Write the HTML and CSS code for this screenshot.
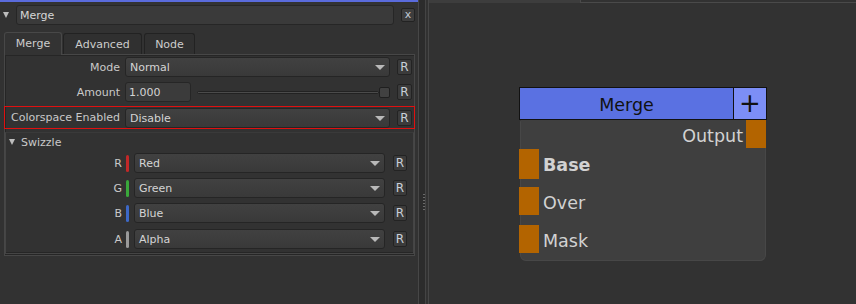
FILE: index.html
```html
<!DOCTYPE html>
<html lang="en">
<head>
<meta charset="utf-8">
<title>Merge</title>
<link rel="stylesheet" href="styles.css">
</head>
<body>
<div class="app">
	<div class="props">
		<div class="props-top"></div>
		<div class="name-row">
			<span class="tri"></span>
			<div class="name-input">Merge</div>
			<span class="close-btn">x</span>
		</div>
		<ul class="tabs">
			<li class="tab is-selected">Merge</li>
			<li class="tab">Advanced</li>
			<li class="tab">Node</li>
		</ul>
		<div class="tab-panel">
			<div class="row">
				<label class="lbl">Mode</label>
				<div class="combo">Normal<span class="arrow"></span></div>
				<span class="rbtn">R</span>
			</div>
			<div class="row">
				<label class="lbl">Amount</label>
				<div class="num">1.000</div>
				<div class="slider"><span class="track"></span><span class="handle"></span></div>
				<span class="rbtn">R</span>
			</div>
			<div class="row is-marked">
				<label class="lbl">Colorspace Enabled</label>
				<div class="combo">Disable<span class="arrow"></span></div>
				<span class="rbtn">R</span>
			</div>
			<div class="group">
				<div class="group-head"><span class="tri small"></span>Swizzle</div>
				<div class="swz">
					<label class="lbl">R</label><span class="chan red"></span>
					<div class="combo">Red<span class="arrow"></span></div>
					<span class="rbtn">R</span>
				</div>
				<div class="swz">
					<label class="lbl">G</label><span class="chan green"></span>
					<div class="combo">Green<span class="arrow"></span></div>
					<span class="rbtn">R</span>
				</div>
				<div class="swz">
					<label class="lbl">B</label><span class="chan blue"></span>
					<div class="combo">Blue<span class="arrow"></span></div>
					<span class="rbtn">R</span>
				</div>
				<div class="swz">
					<label class="lbl">A</label><span class="chan gray"></span>
					<div class="combo">Alpha<span class="arrow"></span></div>
					<span class="rbtn">R</span>
				</div>
			</div>
		</div>
	</div>

	<div class="splitter"><span class="grip"></span></div>

	<div class="graph">
		<div class="graph-top"><span class="graph-tab"></span><span class="graph-line"></span></div>
		<div class="node">
			<div class="node-title">
				<span class="node-name">Merge</span>
				<span class="node-plus">+</span>
			</div>
			<div class="node-body">
				<div class="port-row out"><span class="port-label">Output</span><span class="port"></span></div>
				<div class="port-row base"><span class="port"></span><span class="port-label">Base</span></div>
				<div class="port-row over"><span class="port"></span><span class="port-label">Over</span></div>
				<div class="port-row mask"><span class="port"></span><span class="port-label">Mask</span></div>
			</div>
		</div>
	</div>
</div>
</body>
</html>
```

FILE: styles.css
```css
* {
	margin: 0;
	padding: 0;
	box-sizing: border-box;
}
html, body {
	width: 856px;
	height: 304px;
	overflow: hidden;
	background: #323232;
}
body {
	font-family: "DejaVu Sans", sans-serif;
	font-size: 11px;
	color: #c9c9c9;
}
ul, li {
	list-style: none;
}
.app {
	display: flex;
	height: 304px;
}

/* properties panel */
.props {
	width: 418px;
	flex: none;
}
.props-top {
	height: 2px;
	background: #5a6bdc;
}
.name-row {
	display: flex;
	align-items: center;
	height: 20px;
	margin-top: 3px;
}
.tri {
	width: 0;
	height: 0;
	margin: 0 7px 0 3px;
	border-left: 3px solid transparent;
	border-right: 3px solid transparent;
	border-top: 6px solid #bdbdbd;
}
.tri.small {
	margin: 0 6px 0 3px;
}
.name-input {
	width: 378px;
	height: 20px;
	padding-left: 3px;
	line-height: 19px;
	background: #3a3a3a;
	border: 1px solid #262626;
	border-radius: 3px;
	color: #d6d6d6;
}
.close-btn {
	width: 14px;
	height: 14px;
	margin-left: 7px;
	font-size: 11px;
	line-height: 11px;
	text-align: center;
	color: #c0c8d4;
	background: #3d3d3d;
	border: 1px solid #222;
	border-radius: 2px;
}

/* tabs */
.tabs {
	display: flex;
	align-items: flex-end;
	height: 29px;
	padding-left: 4px;
}
.tab {
	height: 21px;
	margin-right: 1px;
	line-height: 22px;
	text-align: center;
	background: #303030;
	border: 1px solid #222;
	border-bottom: none;
	border-radius: 3px 3px 0 0;
	color: #cdcdcd;
}
.tab.is-selected {
	height: 23px;
	width: 58px;
	line-height: 22px;
	background: #333;
	border-color: #484848;
	position: relative;
	top: 1px;
}
.tab:nth-child(2) { width: 79px; }
.tab:nth-child(3) { width: 51px; margin-left: 1px; }

.tab-panel {
	width: 411px;
	height: 202px;
	margin-left: 4px;
	padding-top: 2px;
	border: 1px solid #474747;
	box-shadow: inset 1px 1px 0 #262626;
}

/* parameter rows */
.row {
	display: flex;
	align-items: center;
	height: 20px;
	margin-bottom: 5px;
}
.lbl {
	width: 120px;
	flex: none;
	white-space: nowrap;
	text-align: right;
	padding-right: 5px;
	color: #c9c9c9;
}
.combo {
	position: relative;
	width: 265px;
	height: 20px;
	padding-left: 4px;
	line-height: 19px;
	background: linear-gradient(#414141, #393939);
	border: 1px solid #252525;
	border-radius: 3px;
	color: #d4d4d4;
}
.arrow {
	position: absolute;
	right: 4px;
	top: 7px;
	width: 0;
	height: 0;
	border-left: 5px solid transparent;
	border-right: 5px solid transparent;
	border-top: 5px solid #b9b9b9;
}
.rbtn {
	width: 15px;
	height: 16px;
	margin-left: 7px;
	font-size: 12px;
	line-height: 14px;
	text-align: center;
	color: #c9cfd8;
	background: #3b3b3b;
	border: 1px solid #232323;
	border-radius: 2px;
}
.num {
	width: 66px;
	height: 20px;
	padding-left: 3px;
	line-height: 19px;
	background: #3b3b3b;
	border: 1px solid #262626;
	border-radius: 3px;
	color: #d4d4d4;
}
.slider {
	display: flex;
	align-items: center;
	width: 199px;
	padding-left: 6px;
}
.track {
	flex: 1;
	height: 3px;
	background: #4b4b4b;
	border: 1px solid #222;
	border-radius: 2px;
}
.handle {
	width: 11px;
	height: 11px;
	background: #414141;
	border: 1px solid #1f1f1f;
	border-radius: 2px;
}
.row.is-marked {
	margin: -1px -1px 3px -1px;
	height: 23px;
	border: 1px solid #e01010;
	padding-left: 1px;
}
.row.is-marked .lbl {
	width: 119px;
}

/* swizzle group */
.group {
	width: 409px;
	height: 122px;
	border: 1px solid #454545;
	border-top-color: #3a3a3a;
	box-shadow: 0 1px 0 #262626, inset 0 -1px 0 #262626;
}
.group-head {
	display: flex;
	align-items: center;
	height: 18px;
	color: #c9c9c9;
}
.swz {
	display: flex;
	align-items: center;
	height: 20px;
	margin-bottom: 5px;
}
.swz:nth-child(2) {
	margin-top: 2px;
}
.swz:nth-child(4) {
	margin-bottom: 6px;
}
.swz .lbl {
	width: 118px;
	padding-right: 2px;
}
.chan {
	width: 3px;
	height: 17px;
	margin: 0 5px 0 2px;
	border-radius: 2px;
}
.chan.red { background: #c22828; }
.chan.green { background: #3aa83a; }
.chan.blue { background: #3d68c6; }
.chan.gray { background: #9a9a9a; }
.swz .combo {
	width: 251px;
}
.swz .rbtn {
	width: 14px;
	margin-left: 8px;
}

/* splitter */
.splitter {
	position: relative;
	width: 11px;
	flex: none;
	border-left: 1px solid #474747;
	border-right: 1px solid #474747;
	box-shadow: inset -2px 0 0 #323232, inset -3px 0 0 #444;
	background: #2c2c2c;
}
.grip {
	position: absolute;
	left: 4px;
	top: 194px;
	width: 2px;
	height: 16px;
	background: repeating-linear-gradient(#6a6a6a 0 1px, transparent 1px 3px);
}

/* node graph */
.graph {
	position: relative;
	flex: 1;
	background: #323232;
}
.graph-top {
	display: flex;
	height: 3px;
}
.graph-tab {
	width: 151px;
	background: #3d3d3d;
}
.graph-line {
	flex: 1;
	border-left: 1px solid #4a4a4a;
	border-bottom: 1px solid #4a4a4a;
}
.node {
	position: absolute;
	left: 90px;
	top: 87px;
	width: 248px;
	font-family: "DejaVu Sans", sans-serif;
	font-size: 17.5px;
}
.node-title {
	display: flex;
	height: 33px;
	border: 1px solid #111;
	color: #111;
}
.node-name {
	flex: 1;
	text-align: center;
	line-height: 34px;
	background: #5a71e2;
	border-right: 1px solid #111;
}
.node-plus {
	width: 32px;
	text-align: center;
	font-size: 26px;
	line-height: 31px;
	background: #7c8ef6;
}
.node-body {
	height: 141px;
	margin: 0 1px;
	background: #3f3f3f;
	border: 1px solid #474747;
	border-top: none;
	border-radius: 2px 2px 6px 6px;
	color: #d2d2d2;
}
.port-row {
	display: flex;
	align-items: center;
	margin-left: -2px;
}
.port {
	width: 20px;
	height: 28px;
	background: #b36400;
}
.port-label {
	margin-left: 4px;
	padding-top: 3px;
}
.port-row.out {
	justify-content: flex-end;
	margin-left: 0;
	margin-right: -1px;
}
.port-row.out .port-label {
	margin: 0 3px 0 0;
}
.port-row.base {
	margin-top: 1px;
}
.port-row.base .port {
	height: 30px;
}
.port-row.base .port-label {
	font-weight: bold;
	padding-top: 2px;
}
.port-row.over {
	margin-top: 8px;
}
.port-row.mask {
	margin-top: 10px;
}
```
